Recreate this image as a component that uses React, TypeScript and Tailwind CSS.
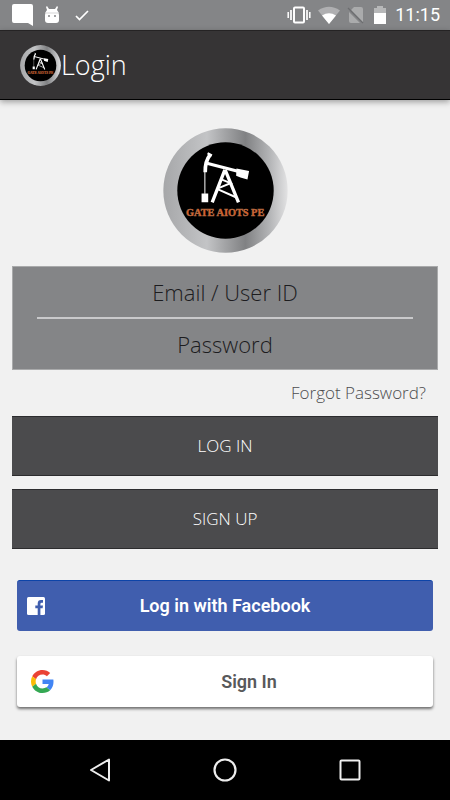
import { useState } from 'react';

function Logo({ className, id }: { className: string; id: string }) {
  return (
    <svg viewBox="37 38 376 376" className={className} role="img" aria-label="Gate Aiots Pe">
      <defs>
        <linearGradient id={id} x1="0" y1="0" x2="1" y2="0">
          <stop offset="0" stopColor="#a6a7a9" />
          <stop offset="0.35" stopColor="#c3c4c6" />
          <stop offset="0.5" stopColor="#a2a3a5" />
          <stop offset="0.66" stopColor="#808183" />
          <stop offset="0.85" stopColor="#b2b3b5" />
          <stop offset="1" stopColor="#e2e2e3" />
        </linearGradient>
      </defs>
      <circle cx="225" cy="226" r="187" fill={`url(#${id})`} />
      <circle cx="225" cy="226" r="145" fill="#000" />
      <g fill="none" stroke="#fff">
        <path d="M180 117Q163 138 164 171" strokeWidth="11" />
        <path d="M171 114L184 121" strokeWidth="7" />
        <path d="M169 144L262 168" strokeWidth="9" />
        <path d="M163 168V236" strokeWidth="3" />
        <path d="M223 164L185 262M224 164L264 262" strokeWidth="10" />
        <path d="M211 192L240 204L204 219M201 222L258 247" strokeWidth="6" />
      </g>
      <path d="M258 160L296 167L291 193L270 187L257 182ZM153 235H173V261H153Z" fill="#fff" />
      <text
        x="224"
        y="304"
        textAnchor="middle"
        fill="#dc5f26"
        stroke="#b06a45"
        strokeWidth="1.5"
        fontSize="31"
        className="font-['Liberation_Serif',serif] font-bold"
      >
        GATE AIOTS PE
      </text>
    </svg>
  );
}

function StatusBar() {
  return (
    <div className="flex h-[30px] items-center justify-between bg-[#848587] pr-[10px] pl-3 text-white">
      <div className="flex items-center gap-[10px]">
        <svg viewBox="0 0 22 22" className="size-[22px]" fill="currentColor">
          <path d="M2 0H19Q21 0 21 2V22L16 19H2Q0 19 0 17V2Q0 0 2 0Z" />
        </svg>
        <svg viewBox="0 0 16 20" className="h-5 w-4" fill="currentColor">
          <path d="M3 1L5 4H11L13 1L14 2L13 5Q15 7 15 10V15Q15 18 12 18H4Q1 18 1 15V10Q1 7 3 5L2 2Z" />
          <path d="M1 8H15" stroke="#d5d5d6" />
          <circle cx="5" cy="11" r="1" fill="#848587" />
          <circle cx="11" cy="11" r="1" fill="#848587" />
        </svg>
        <svg viewBox="0 0 16 12" className="ml-1 h-3 w-4" fill="none" stroke="currentColor" strokeWidth="1.7">
          <path d="M2 7L5.5 10.5L14 2" />
        </svg>
      </div>
      <div className="flex items-center">
        <svg viewBox="0 0 24 18" className="mr-[6px] h-[18px] w-6" fill="none" stroke="currentColor">
          <rect x="7" y="1.5" width="10" height="15" rx="1" strokeWidth="2" />
          <path d="M4 4V14M20 4V14" strokeWidth="1.7" />
          <path d="M1.2 6V12M22.8 6V12" strokeWidth="1.5" />
        </svg>
        <svg viewBox="0 0 24 18" className="h-[18px] w-6" fill="currentColor">
          <path d="M12 18L1 4.5Q12 -3 23 4.5Z" opacity="0.35" />
          <path d="M12 18L5 9.5Q12 5 19 9.5Z" />
        </svg>
        <svg viewBox="0 0 18 18" className="ml-[6px] size-[18px]">
          <path d="M7 1H14Q16 1 16 3V17L4 4ZM2 6L13 17H4Q2 17 2 15Z" fill="#aaabac" />
          <path d="M1 2L16 17" stroke="#6c6d6f" strokeWidth="1.3" />
        </svg>
        <svg viewBox="0 0 14 18" className="mr-2 ml-2 h-[18px] w-[14px]">
          <path d="M4 0H10V2H13V7H1V2H4Z" fill="#b7b8b9" />
          <path d="M1 7H13V18H1Z" fill="#fff" />
        </svg>
        <span className="font-['Roboto',sans-serif] text-lg leading-6">11:15</span>
      </div>
    </div>
  );
}

function GoogleIcon() {
  return (
    <svg viewBox="0 0 48 48" className="size-[23px]">
      <path
        fill="#ea4335"
        d="M24 9.5c3.54 0 6.71 1.22 9.21 3.6l6.85-6.85C35.9 2.38 30.47 0 24 0 14.62 0 6.51 5.38 2.56 13.22l7.98 6.19C12.43 13.72 17.74 9.5 24 9.5z"
      />
      <path
        fill="#4285f4"
        d="M46.98 24.55c0-1.57-.15-3.09-.38-4.55H24v9.02h12.94c-.58 2.96-2.26 5.48-4.78 7.18l7.73 6c4.51-4.18 7.09-10.36 7.09-17.65z"
      />
      <path
        fill="#fbbc05"
        d="M10.53 28.59c-.48-1.45-.76-2.99-.76-4.59s.27-3.14.76-4.59l-7.98-6.19C.92 16.46 0 20.12 0 24c0 3.88.92 7.54 2.56 10.78l7.97-6.19z"
      />
      <path
        fill="#34a853"
        d="M24 48c6.48 0 11.93-2.13 15.89-5.81l-7.73-6c-2.15 1.45-4.92 2.3-8.16 2.3-6.26 0-11.57-4.22-13.47-9.91l-7.98 6.19C6.51 42.62 14.62 48 24 48z"
      />
    </svg>
  );
}

function NavBar() {
  return (
    <nav className="flex h-[60px] items-center justify-center gap-[101px] bg-black text-[#eee]">
      <button type="button" aria-label="Back">
        <svg viewBox="0 0 24 24" className="size-6" fill="none" stroke="currentColor" strokeWidth="2" strokeLinejoin="round">
          <path d="M21 1.5V22.5L3 12Z" />
        </svg>
      </button>
      <button type="button" aria-label="Home">
        <svg viewBox="0 0 24 24" className="size-6" fill="none" stroke="currentColor" strokeWidth="2.2">
          <circle cx="12" cy="12" r="10.5" />
        </svg>
      </button>
      <button type="button" aria-label="Recent apps">
        <svg viewBox="0 0 24 24" className="size-6" fill="none" stroke="currentColor" strokeWidth="2">
          <rect x="2.5" y="2.5" width="19" height="19" rx="1" />
        </svg>
      </button>
    </nav>
  );
}

const FIELD =
  'w-full bg-transparent text-center text-[22px] font-light text-[#1c1c1e] outline-none placeholder:text-[#1c1c1e] placeholder:opacity-100';

const ACTION =
  'h-[60px] w-full border-y border-[#2c2c2e] bg-[#4b4b4d] text-[17px] font-light text-white';

export default function App() {
  const [email, setEmail] = useState('');
  const [password, setPassword] = useState('');

  return (
    <div className="flex min-h-screen flex-col bg-[#f1f1f1] font-['Open_Sans',sans-serif]">
      <StatusBar />
      <header className="flex h-[70px] items-center border-y border-t-[#252324] border-b-black bg-[#363435] pl-5 shadow-[0_2px_6px_rgba(0,0,0,0.35)]">
        <Logo id="ring-small" className="size-[41px]" />
        <h1 className="text-[27px] leading-8 font-light text-white">Login</h1>
      </header>

      <main className="flex-1 px-3 pt-7 pb-8">
        <Logo id="ring-large" className="mx-auto size-[125px]" />

        <form onSubmit={(e) => e.preventDefault()}>
          <div className="mt-[13px] border border-[#a9aaab] bg-[#848587] px-6">
            <input
              type="text"
              aria-label="Email / User ID"
              placeholder="Email / User ID"
              value={email}
              onChange={(e) => setEmail(e.target.value)}
              className={`${FIELD} h-[52px] border-b-2 border-[#c9c9cb]`}
            />
            <input
              type="password"
              aria-label="Password"
              placeholder="Password"
              value={password}
              onChange={(e) => setPassword(e.target.value)}
              className={`${FIELD} h-[50px]`}
            />
          </div>

          <div className="flex h-[46px] items-center justify-end pr-3">
            <a href="#forgot" className="text-[17px] font-light text-[#4c4d4f]">
              Forgot Password?
            </a>
          </div>

          <div className="flex flex-col gap-[13px]">
            <button type="submit" className={ACTION}>
              LOG IN
            </button>
            <button type="button" className={ACTION}>
              SIGN UP
            </button>
          </div>
        </form>

        <div className="mt-[31px] flex flex-col gap-[25px] px-[5px] font-['Roboto',sans-serif] text-lg font-semibold">
          <button
            type="button"
            className="grid h-[51px] grid-cols-[36px_1fr_36px] items-center rounded-[3px] border-t border-[#0d44a8] bg-[#405eae] text-white"
          >
            <svg viewBox="0 0 18 18" className="ml-[10px] size-[18px]">
              <rect width="18" height="18" rx="1.5" fill="#fff" />
              <path
                d="M10.7 18V11.2H8.3V8.4H10.7V6.4Q10.7 3 14.1 3H16V5.8H14.8Q13.4 5.8 13.4 7V8.4H16L15.6 11.2H13.4V18Z"
                fill="#405eae"
              />
            </svg>
            <span>Log in with Facebook</span>
          </button>
          <button
            type="button"
            className="grid h-[51px] grid-cols-[48px_1fr] items-center rounded-[3px] bg-white text-[#58595b] shadow-[0_2px_3px_rgba(0,0,0,0.55)]"
          >
            <span className="pl-[14px]">
              <GoogleIcon />
            </span>
            <span>Sign In</span>
          </button>
        </div>
      </main>

      <NavBar />
    </div>
  );
}
